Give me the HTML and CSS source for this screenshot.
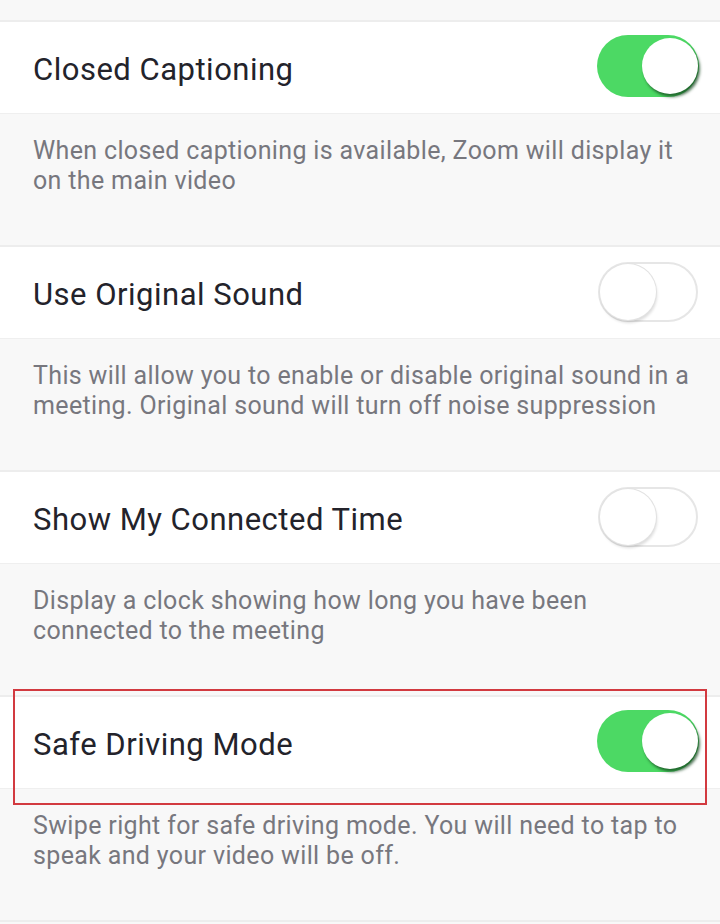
FILE: index.html
```html
<!DOCTYPE html>
<html>
<head>
<meta charset="utf-8">
<link rel="stylesheet" href="styles.css">
</head>
<body>
<div class="top"></div>
<div class="section">
  <div class="row">
    <span class="title">Closed Captioning</span>
    <span class="toggle on"><span class="knob"></span></span>
  </div>
  <div class="desc">When closed captioning is available, Zoom will display it on the main video</div>
</div>
<div class="section">
  <div class="row">
    <span class="title">Use Original Sound</span>
    <span class="toggle"><span class="knob"></span></span>
  </div>
  <div class="desc">This will allow you to enable or disable original sound in a meeting. Original sound will turn off noise suppression</div>
</div>
<div class="section">
  <div class="row">
    <span class="title">Show My Connected Time</span>
    <span class="toggle"><span class="knob"></span></span>
  </div>
  <div class="desc">Display a clock showing how long you have been connected to the meeting</div>
</div>
<div class="section highlighted">
  <div class="row">
    <span class="title">Safe Driving Mode</span>
    <span class="toggle on"><span class="knob"></span></span>
  </div>
  <div class="desc">Swipe right for safe driving mode. You will need to tap to speak and your video will be off.</div>
  <div class="redbox"></div>
</div>
<div class="endline"></div>
</body>
</html>
```
FILE: styles.css
```css
html, body {
  margin: 0;
  padding: 0;
  background: #f8f8f8;
  font-family: Roboto, "Liberation Sans", sans-serif;
  overflow: hidden;
}
.top { height: 20px; }
.section { position: relative; }
.row {
  background: #ffffff;
  border-top: 2px solid #ededed;
  border-bottom: 1px solid #efefef;
  display: flex;
  align-items: center;
  justify-content: space-between;
  padding: 3px 21px 0 33px;
  height: 88px;
}
.title {
  font-size: 31px;
  color: #23232b;
  letter-spacing: 0.5px;
}
.desc {
  height: 131px;
  box-sizing: border-box;
  padding: 22px 20px 0 33px;
  font-size: 25px;
  line-height: 30px;
  color: #77777e;
  letter-spacing: 0.35px;
}
.toggle {
  position: relative;
  width: 100px;
  height: 60px;
  border-radius: 30px;
  box-sizing: border-box;
  background: #ffffff;
  border: 2px solid #e6e6e6;
  margin-bottom: 5px;
  margin-right: 1px;
}
.toggle .knob {
  position: absolute;
  top: 0;
  left: 0;
  width: 56px;
  height: 56px;
  border-radius: 50%;
  background: #ffffff;
  box-shadow: 0 0 0 1px #e2e2e2, 1px 3px 3px rgba(0,0,0,0.14);
}
.toggle.on {
  width: 102px;
  height: 62px;
  border-radius: 31px;
  margin-right: 0;
  margin-bottom: 6px;
  background: #4cd964;
  border: none;
}
.toggle.on .knob {
  left: auto;
  right: 1px;
  top: 3px;
  box-shadow: 2px 3px 3px rgba(20,70,30,0.75);
}
.redbox {
  position: absolute;
  left: 13px;
  top: -6px;
  width: 694px;
  height: 116px;
  box-sizing: border-box;
  border: 2px solid #d23a40;
}
.endline {
  border-top: 2px solid #ededed;
  height: 10px;
}
```
